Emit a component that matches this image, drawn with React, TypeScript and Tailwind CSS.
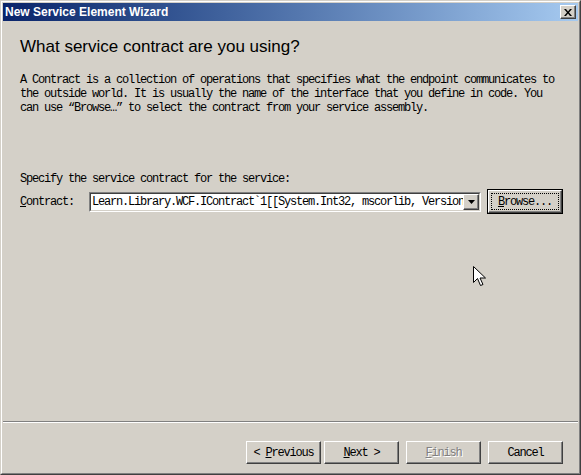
import React from 'react';

const mono = "font-['Liberation_Mono',monospace] text-[12px] leading-[14px] tracking-[-1.2px]";

function Button({ children, disabled }: { children: React.ReactNode; disabled?: boolean }) {
  return (
    <div
      className={
        'w-[75px] h-[23px] flex items-center justify-center border border-t-white border-l-white border-r-[#404040] border-b-[#404040] shadow-[inset_-1px_-1px_0_#808080] ' +
        mono +
        (disabled ? ' text-[#808080] [text-shadow:1px_1px_0_#ffffff]' : ' text-black')
      }
    >
      <span className="whitespace-pre">{children}</span>
    </div>
  );
}

export default function App() {
  return (
    <div className="w-[581px] h-[475px] relative border border-t-[#d4d0c8] border-l-[#d4d0c8] border-r-[#404040] border-b-[#404040] bg-[#d4d0c8]">
      <div className="w-full h-full border border-t-white border-l-white border-r-[#808080] border-b-[#808080] p-px flex flex-col">
        {/* title bar */}
        <div className="h-[18px] flex items-center justify-between pl-[2px] pr-[2px] bg-gradient-to-r from-[#0a246a] to-[#a6caf0]">
          <span className="font-['Liberation_Sans',sans-serif] font-bold text-[12px] text-white leading-none">
            New Service Element Wizard
          </span>
          <div className="w-[16px] h-[14px] flex items-center justify-center bg-[#d4d0c8] border border-t-white border-l-white border-r-[#404040] border-b-[#404040] shadow-[inset_-1px_-1px_0_#808080]">
            <svg width="8" height="7" viewBox="0 0 8 7">
              <path d="M0 0h2l2 2.5L6 0h2L5 3.5 8 7H6L4 4.5 2 7H0l3-3.5z" fill="#000" />
            </svg>
          </div>
        </div>

        <div className="pl-[17px] pr-[15px] flex flex-col flex-1">
          <h1 className="mt-[16px] font-['Liberation_Sans',sans-serif] text-[17px] leading-[20px] text-black">
            What service contract are you using?
          </h1>
          <p className={'mt-[16px] text-black ' + mono}>
            A Contract is a collection of operations that specifies what the endpoint communicates to
            <br />
            the outside world. It is usually the name of the interface that you define in code. You
            <br />
            can use “Browse…” to select the contract from your service assembly.
          </p>

          <div className={'mt-[57px] text-black ' + mono}>Specify the service contract for the service:</div>
          <div className="mt-[3px] h-[25px] flex items-center">
            <div className={'w-[69px] shrink-0 text-black ' + mono}>
              <span className="underline">C</span>ontract:
            </div>
            <div className="w-[392px] shrink-0 h-[20px] flex border border-t-[#808080] border-l-[#808080] border-r-white border-b-white">
              <div className="flex-1 min-w-0 flex border border-t-[#404040] border-l-[#404040] border-r-[#d4d0c8] border-b-[#d4d0c8] bg-white">
                <div className={'flex-1 min-w-0 overflow-hidden whitespace-nowrap pl-[1px] text-black ' + mono + ' leading-[16px]'}>
                  Learn.Library.WCF.IContract`1[[System.Int32, mscorlib, Version
                </div>
                <div className="w-[16px] h-[16px] shrink-0 flex items-center justify-center bg-[#d4d0c8] border border-t-white border-l-white border-r-[#404040] border-b-[#404040] shadow-[inset_-1px_-1px_0_#808080]">
                  <svg width="7" height="4" viewBox="0 0 7 4">
                    <path d="M0 0h7L3.5 4z" fill="#000" />
                  </svg>
                </div>
              </div>
            </div>
            <div className="ml-[6px] w-[76px] shrink-0 h-[25px] border border-black">
              <div className="w-full h-full border border-t-white border-l-white border-r-[#404040] border-b-[#404040] shadow-[inset_-1px_-1px_0_#808080] p-[2px]">
                <div className={'w-full h-full flex items-center justify-center border border-dotted border-black text-black ' + mono}>
                  <span>
                    <span className="underline">B</span>rowse...
                  </span>
                </div>
              </div>
            </div>
          </div>
        </div>

        <div className="h-[2px] border-t border-t-[#808080] border-b border-b-white" />
        <div className="mt-[18px] mb-[8px] pr-[15px] flex justify-end">
          <Button>
            {'< '}
            <span className="underline">P</span>revious
          </Button>
          <div className="ml-[3px]">
            <Button>
              <span className="underline">N</span>
              {'ext >'}
            </Button>
          </div>
          <div className="ml-[7px]">
            <Button disabled>
              <span className="underline">F</span>inish
            </Button>
          </div>
          <div className="ml-[7px]">
            <Button>Cancel</Button>
          </div>
        </div>
      </div>

      {/* mouse cursor */}
      <svg className="absolute left-[472px] top-[265px]" width="13" height="21" viewBox="0 0 13 21">
        <path d="M0.5 0.5v16l4-4 3 7 2.5-1-3-6.5h5.5z" fill="#fff" stroke="#000" strokeWidth="1" />
      </svg>
    </div>
  );
}
